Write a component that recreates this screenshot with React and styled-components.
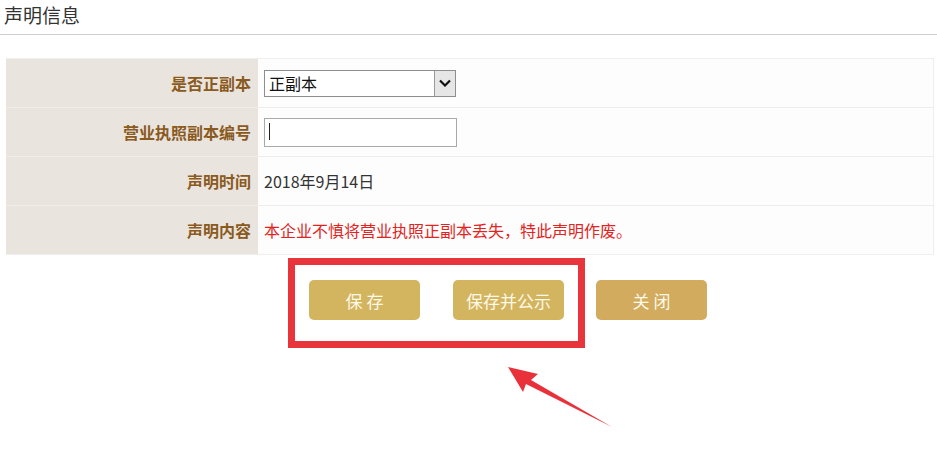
import React from 'react'
import styled, { createGlobalStyle } from 'styled-components';

const GlobalStyle = createGlobalStyle`
    body {
        margin: 0;
        background: #ffffff;
        font-family: "Noto Sans CJK SC", "Liberation Sans", sans-serif;
    }
`;

const rows = [
    { label: '是否正副本', kind: 'select' },
    { label: '营业执照副本编号', kind: 'input' },
    { label: '声明时间', kind: 'text', value: '2018年9月14日' },
    { label: '声明内容', kind: 'red', value: '本企业不慎将营业执照正副本丢失，特此声明作废。' },
];

function App(){
    return(
        <Page>
            <GlobalStyle />
            <Header>声明信息</Header>
            <Table>
                {rows.map((row) => (
                    <Row key={row.label}>
                        <Label>{row.label}</Label>
                        <Value $red={row.kind === 'red'}>
                            {row.kind === 'select' && (
                                <SelectBox>
                                    <Select defaultValue='正副本'>
                                        <option>正副本</option>
                                        <option>正本</option>
                                        <option>副本</option>
                                    </Select>
                                    <ArrowBox>
                                        <svg width="12" height="8" viewBox="0 0 12 8">
                                            <path d="M1 1.5 L6 6.5 L11 1.5" fill="none" stroke="#111" strokeWidth="2.2" />
                                        </svg>
                                    </ArrowBox>
                                </SelectBox>
                            )}
                            {row.kind === 'input' && (
                                <InputWrap>
                                    <TextInput type='text' />
                                </InputWrap>
                            )}
                            {(row.kind === 'text' || row.kind === 'red') && row.value}
                        </Value>
                    </Row>
                ))}
            </Table>
            <Actions>
                <Highlight>
                    <Button>保 存</Button>
                    <Button>保存并公示</Button>
                </Highlight>
                <CloseButton>关 闭</CloseButton>
                <Arrow width="937" height="472" viewBox="0 0 937 472">
                    <polygon points="508,367 538,374 531,380 612,427 526,384 523,392" fill="#e8313a" />
                </Arrow>
            </Actions>
        </Page>
    );
}

export default App;


const Page = styled.div`
    position: relative;
    width: 937px;
    height: 472px;
    overflow: hidden;
    background: #fff;
`;

const Header = styled.div`
    height: 34px;
    padding-left: 4px;
    font-size: 19px;
    line-height: 30px;
    color: #333;
    border-bottom: 1px solid #cfcfcf;
`;

const Table = styled.div`
    margin: 23px 3px 0 6px;
    display: flex;
    flex-direction: column;
    border-top: 1px solid #f0eeee;
`;

const Row = styled.div`
    display: grid;
    grid-template-columns: 252px 1fr;
    height: 48px;
    border-bottom: 1px solid #efedeb;
    &:last-child {
        border-bottom: 1px solid #f0eeee;
    }
`;

const Label = styled.div`
    display: flex;
    align-items: center;
    justify-content: flex-end;
    padding-right: 7px;
    background: #e9e4de;
    color: #8a5a1e;
    font-size: 16px;
    font-weight: bold;
`;

const Value = styled.div`
    display: flex;
    align-items: center;
    padding-left: 6px;
    background: #fdfdfd;
    font-size: 16px;
    color: ${(p) => (p.$red ? '#e3241e' : '#333')};
    border-right: 1px solid #eeeeee;
`;

const SelectBox = styled.div`
    display: flex;
    width: 190px;
    height: 25px;
    border: 1px solid #8e8e8e;
    background: #fff;
`;

const Select = styled.select`
    flex: 1;
    appearance: none;
    border: none;
    outline: none;
    background: #fff;
    padding: 0 4px;
    font-family: "Noto Sans CJK SC", "Liberation Sans", sans-serif;
    font-size: 16px;
    color: #111;
`;

const ArrowBox = styled.div`
    width: 20px;
    display: flex;
    align-items: center;
    justify-content: center;
    background: #e6e6e6;
    border-left: 1px solid #9a9a9a;
`;

const InputWrap = styled.div`
    position: relative;
    &::after {
        content: '';
        position: absolute;
        left: 5px;
        top: 5px;
        width: 1px;
        height: 17px;
        background: #222;
    }
`;

const TextInput = styled.input`
    box-sizing: border-box;
    width: 193px;
    height: 29px;
    border: 1px solid #a9a9a9;
    outline: none;
    padding: 0 5px;
    font-size: 16px;
`;

const Actions = styled.div`
    display: flex;
    align-items: flex-start;
    gap: 11px;
    padding: 3px 0 0 288px;
`;

const Highlight = styled.div`
    display: flex;
    gap: 33px;
    padding: 15px 14px 21px;
    border: 7px solid #e8343b;
`;

const Button = styled.button`
    width: 111px;
    height: 40px;
    border: none;
    border-radius: 5px;
    background: #d3b45f;
    color: #fff9e8;
    font-family: "Noto Sans CJK SC", "Liberation Sans", sans-serif;
    font-size: 17px;
    white-space: pre;
    cursor: pointer;
`;

const CloseButton = styled(Button)`
    margin-top: 22px;
    background: #d2ab5f;
`;

const Arrow = styled.svg`
    position: absolute;
    left: 0;
    top: 0;
    pointer-events: none;
`;
